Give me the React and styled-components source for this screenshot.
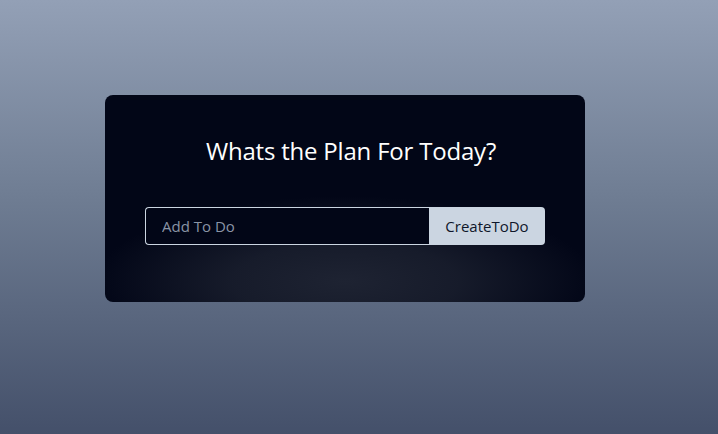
import React, { useState } from "react";
import styled, { createGlobalStyle } from "styled-components";

const GlobalStyle = createGlobalStyle`
  html, body {
    margin: 0;
    padding: 0;
  }
  body {
    font-family: "Open Sans", "Noto Sans", sans-serif;
  }
`;

const App = () => {
  const [todo, setTodo] = useState("");

  return (
    <Page>
      <GlobalStyle />
      <Card>
        <Title>Whats the Plan For Today?</Title>
        <Form onSubmit={(e) => e.preventDefault()}>
          <Input
            type="text"
            placeholder="Add To Do"
            value={todo}
            onChange={(e) => setTodo(e.target.value)}
          />
          <Button type="submit">CreateToDo</Button>
        </Form>
      </Card>
    </Page>
  );
};

export default App;

const Page = styled.div`
  width: 100%;
  height: 434px;
  box-sizing: border-box;
  padding: 95px 0 0 105px;
  background: linear-gradient(180deg, #93a0b6 0%, #6f7d93 45%, #44506a 100%);
`;

const Card = styled.div`
  width: 480px;
  height: 207px;
  box-sizing: border-box;
  padding: 38px 40px 0;
  border-radius: 8px;
  background:
    radial-gradient(ellipse 250px 85px at 50% 90%, rgba(30, 35, 50, 1) 0%, rgba(26, 31, 46, 0.85) 45%, rgba(2, 6, 23, 0) 100%),
    #020617;
  display: flex;
  flex-direction: column;
  align-items: center;
`;

const Title = styled.h1`
  margin: 0 0 0 12px;
  color: #ffffff;
  font-family: "Open Sans", sans-serif;
  font-size: 24px;
  font-weight: 400;
  line-height: 36px;
  letter-spacing: -0.2px;
`;

const Form = styled.form`
  margin-top: 38px;
  width: 400px;
  display: flex;
`;

const Input = styled.input`
  flex: 1;
  min-width: 0;
  height: 38px;
  box-sizing: border-box;
  padding: 0 16px;
  border: 1px solid #cbd5e1;
  border-right: none;
  border-radius: 4px 0 0 4px;
  background: #020617;
  color: #e2e8f0;
  font-family: "Open Sans", sans-serif;
  font-size: 15px;
  outline: none;

  &::placeholder {
    color: #8a94a6;
  }
`;

const Button = styled.button`
  width: 116px;
  height: 38px;
  border: none;
  border-radius: 0 4px 4px 0;
  background: #cbd5e1;
  color: #0f172a;
  font-family: "Open Sans", sans-serif;
  font-size: 15px;
  cursor: pointer;
`;
